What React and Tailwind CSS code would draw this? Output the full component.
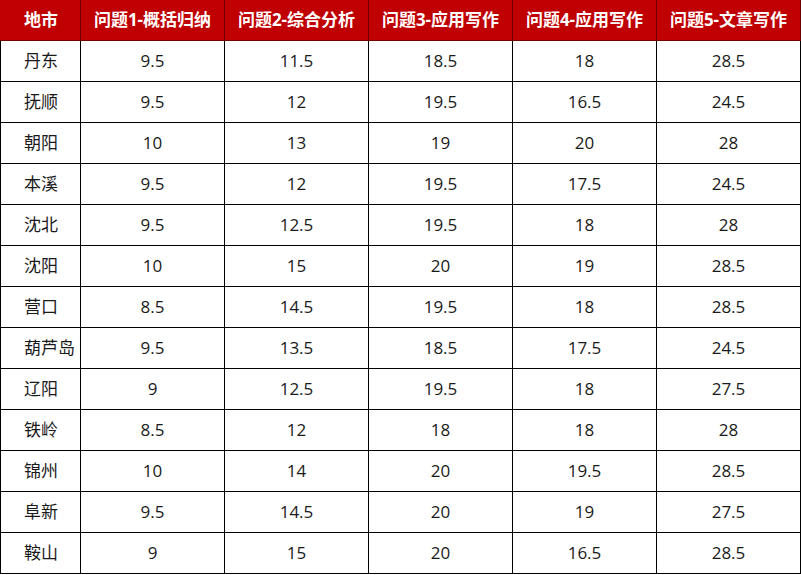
const headers = ['地市', '问题1-概括归纳', '问题2-综合分析', '问题3-应用写作', '问题4-应用写作', '问题5-文章写作']

const rows = [
  ['丹东', '9.5', '11.5', '18.5', '18', '28.5'],
  ['抚顺', '9.5', '12', '19.5', '16.5', '24.5'],
  ['朝阳', '10', '13', '19', '20', '28'],
  ['本溪', '9.5', '12', '19.5', '17.5', '24.5'],
  ['沈北', '9.5', '12.5', '19.5', '18', '28'],
  ['沈阳', '10', '15', '20', '19', '28.5'],
  ['营口', '8.5', '14.5', '19.5', '18', '28.5'],
  ['葫芦岛', '9.5', '13.5', '18.5', '17.5', '24.5'],
  ['辽阳', '9', '12.5', '19.5', '18', '27.5'],
  ['铁岭', '8.5', '12', '18', '18', '28'],
  ['锦州', '10', '14', '20', '19.5', '28.5'],
  ['阜新', '9.5', '14.5', '20', '19', '27.5'],
  ['鞍山', '9', '15', '20', '16.5', '28.5']
]

const App = () => {
  return (
    <div
      className="w-[801px] h-[575px] bg-white"
      style={{ fontFamily: '"Open Sans", "Noto Sans CJK SC", sans-serif' }}
    >
      <div className="grid grid-cols-[81px_144px_144px_144px_144px_144px]">
        {headers.map((h, i) => (
          <div
            key={h}
            className={
              'h-[41px] bg-[#c00000] text-white font-bold text-[17px] flex items-center border-b border-b-[#6e0000] border-r border-r-[#6e0000] ' +
              (i === 0 ? 'pl-6' : 'justify-center')
            }
          >
            {h}
          </div>
        ))}
        {rows.map((r) =>
          r.map((c, i) => (
            <div
              key={r[0] + i}
              className={
                'h-[41px] flex items-center text-[17px] text-[#1a1a1a] border-b border-r border-black ' +
                (i === 0 ? 'pl-[23px] border-l' : 'justify-center')
              }
            >
              {c}
            </div>
          ))
        )}
      </div>
    </div>
  )
}

export default App
